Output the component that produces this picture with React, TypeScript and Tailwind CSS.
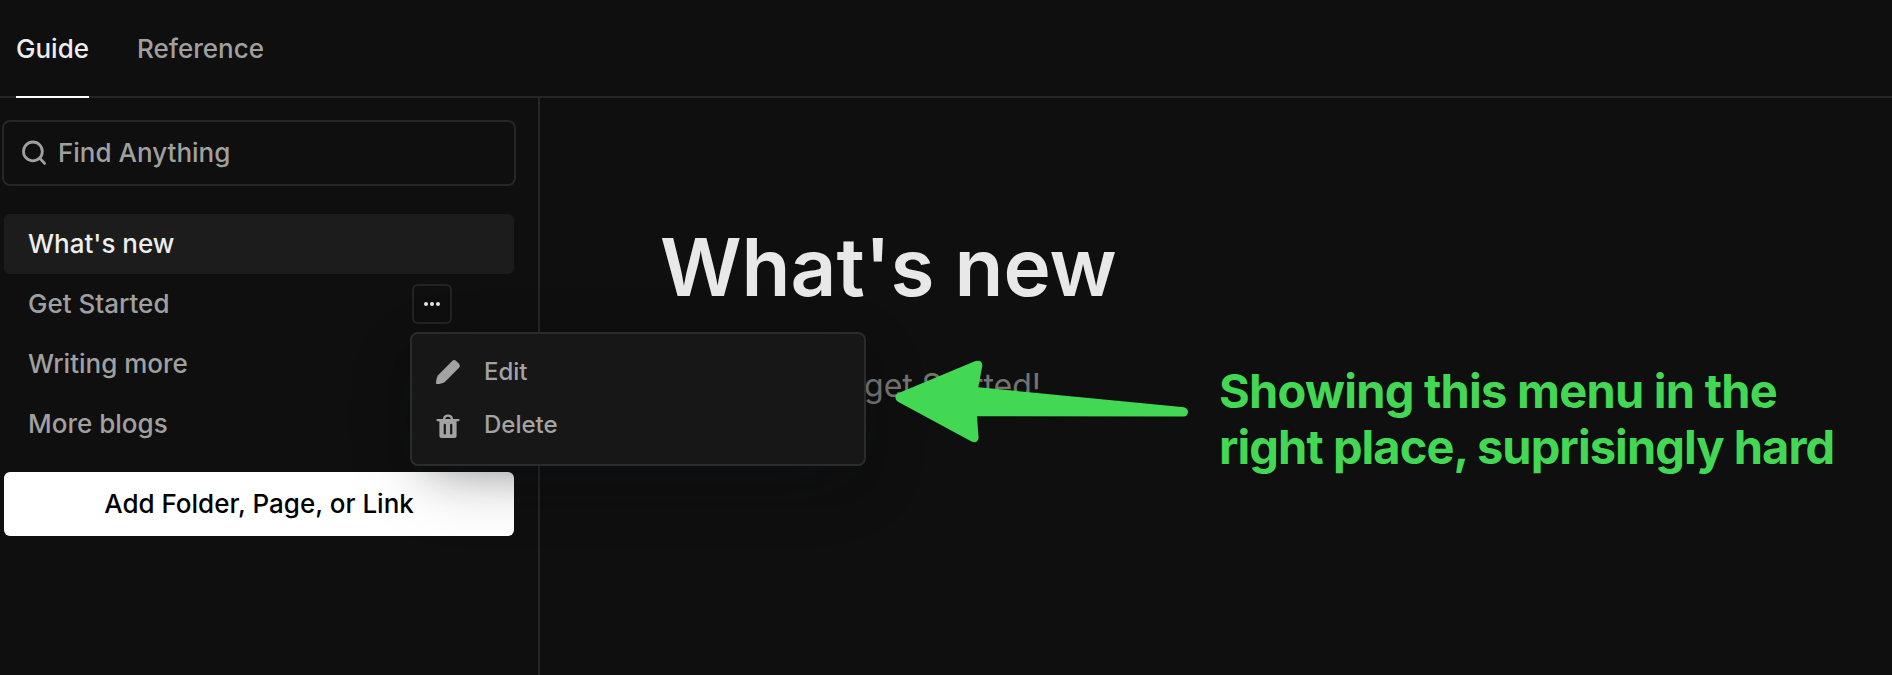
import React, { useState } from 'react';

interface NavItem {
  title: string;
  menu?: boolean;
}

const tabs = ['Guide', 'Reference'];

const pages: NavItem[] = [
  { title: "What's new" },
  { title: 'Get Started', menu: true },
  { title: 'Writing more' },
  { title: 'More blogs' },
];

const SearchIcon = () => (
  <svg width="26" height="26" viewBox="0 0 26 26" fill="none" stroke="#a0a0a0" strokeWidth="2.8" strokeLinecap="round">
    <circle cx="10.9" cy="11.4" r="9.4" />
    <path d="M17.8 18.3 L22.6 23.4" />
  </svg>
);

const PencilIcon = () => (
  <svg width="26" height="26" viewBox="0 0 26 26" fill="#a3a3a3">
    <path d="M1.2 24.9 C0.9 22.6 1.3 19.6 2.8 16.6 L17.2 2 Q19.2 0.2 21.2 2 L24 4.8 Q25.8 6.8 24 8.8 L9.6 23.2 C6.8 24.7 3.8 25.2 1.2 24.9 Z" />
  </svg>
);

const TrashIcon = () => (
  <svg width="26" height="26" viewBox="0 0 26 26" fill="none">
    <path d="M9 8 Q9 3.6 13 3.6 Q17 3.6 17 8" stroke="#a3a3a3" strokeWidth="2.3" />
    <path d="M2.6 8.2 H23.4" stroke="#a3a3a3" strokeWidth="2.3" strokeLinecap="round" />
    <path d="M4.4 8 H21.6 V23.9 Q21.6 26 19.6 26 H6.4 Q4.4 26 4.4 23.9 Z" fill="#a3a3a3" />
    <path d="M9.8 12.8 V21.4 M16.2 12.8 V21.4" stroke="#171717" strokeWidth="2.2" strokeLinecap="round" />
  </svg>
);

const Menu = () => (
  <div className="absolute -left-0.5 top-12 z-10 flex h-[134px] w-[456px] flex-col rounded-lg border-2 border-[#2b2b2b] bg-[#171717] pl-[23px] pt-[11px] text-2xl text-[#a3a3a3] shadow-[0_20px_76px_-20px_rgba(14,18,22,0.35),0_20px_40px_-20px_rgba(14,18,22,0.3)]">
    <button className="flex h-[53px] items-center gap-[23px]">
      <PencilIcon />
      Edit
    </button>
    <button className="flex h-[53px] items-center gap-[23px]">
      <TrashIcon />
      Delete
    </button>
  </div>
);

const Sidebar = () => {
  const [active, setActive] = useState("What's new");

  return (
    <aside className="w-[540px] shrink-0 border-r-2 border-[#262626] pt-[22px]">
      <div className="ml-0.5 flex h-[66px] w-[514px] items-center gap-2.5 rounded-lg border-2 border-[#262626] pl-[18px] text-[#a0a0a0]">
        <SearchIcon />
        <span>Find Anything</span>
      </div>
      <nav className="ml-1 mt-7 w-[510px]">
        {pages.map((page) => (
          <div
            key={page.title}
            onClick={() => setActive(page.title)}
            className={`flex h-[60px] items-center justify-between rounded-md pl-6 pr-[62px] ${
              active === page.title ? 'bg-[#1c1c1c] text-[#ededed]' : 'text-[#a0a0a0]'
            }`}
          >
            <span>{page.title}</span>
            {page.menu && (
              <div className="relative size-10">
                <button className="flex size-10 items-center justify-center gap-0.5 rounded-md border-2 border-[#232323]">
                  <span className="size-1 rounded-full bg-[#e5e5e5]" />
                  <span className="size-1 rounded-full bg-[#e5e5e5]" />
                  <span className="size-1 rounded-full bg-[#e5e5e5]" />
                </button>
                <Menu />
              </div>
            )}
          </div>
        ))}
      </nav>
      <button className="ml-1 mt-[18px] flex h-16 w-[510px] items-center justify-center rounded-md bg-white text-black">
        Add Folder, Page, or Link
      </button>
    </aside>
  );
};

const Arrow = () => (
  <svg className="absolute left-[890px] top-[355px] z-20" width="304" height="92" viewBox="0 0 304 92">
    <path
      d="M7.5 38.6 L85.5 6 Q92.5 4.5 92.3 11 L88.3 32.2 L294 52.3 Q298 53.3 298 57 Q297.5 61.5 293.5 61.6 L87 61.2 L88.6 83 Q87.5 88.5 82 86.8 L8 46.8 Q3 43 7.5 38.6 Z"
      fill="#43d854"
    />
  </svg>
);

const App = () => (
  <div className="flex h-[675px] w-full flex-col overflow-hidden bg-[#0f0f0f] font-['Inter',sans-serif] text-[26px] font-medium leading-none">
    <header className="flex h-[98px] shrink-0 gap-12 border-b-2 border-[#262626] pl-4">
      {tabs.map((tab, i) => (
        <a
          key={tab}
          className={`-mb-0.5 flex h-[98px] items-center border-b-2 pt-0.5 ${
            i === 0 ? 'border-white text-[#ededed]' : 'border-transparent text-[#a0a0a0]'
          }`}
        >
          {tab}
        </a>
      ))}
    </header>
    <div className="flex min-h-0 flex-1">
      <Sidebar />
      <main className="flex-1 pl-[120px] pt-[129px]">
        <h1 className="text-[80px] font-semibold leading-none text-[#e8e8e8]">What's new</h1>
        <p className="mt-[63px] pl-[204px] text-[32px] font-normal leading-none text-[#737373]">get Started!</p>
      </main>
    </div>
    <Arrow />
    <p className="absolute left-[1219px] top-[363px] z-20 whitespace-nowrap text-[47px] font-bold leading-[56px] tracking-[-0.02em] text-[#43d854]">
      <span className="tracking-[-0.016em]">Showing this menu in the</span>
      <br />
      right place, suprisingly hard
    </p>
  </div>
);

export default App;
